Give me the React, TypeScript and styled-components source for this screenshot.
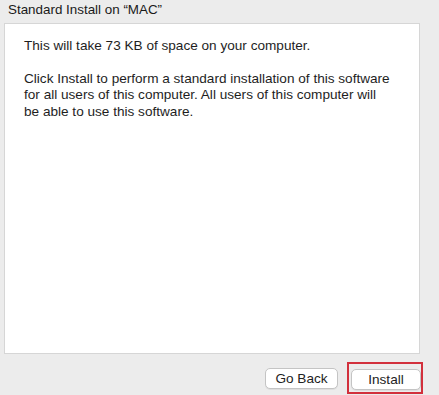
import React from 'react';
import styled, { createGlobalStyle } from 'styled-components';

const GlobalStyle = createGlobalStyle`
  html, body {
    margin: 0;
    padding: 0;
    background: #ececec;
  }
  body {
    font-family: 'Liberation Sans', Arial, sans-serif;
    color: #1d1d1d;
  }
`;

const Window = styled.div`
  width: 439px;
  height: 395px;
  display: flex;
  flex-direction: column;
  box-sizing: border-box;
  padding: 0 19px 0 4px;
`;

const Title = styled.div`
  font-size: 13.4px;
  line-height: 16px;
  padding: 2px 0 0 4px;
  height: 21px;
  color: #1a1a1a;
`;

const Panel = styled.div`
  height: 331px;
  box-sizing: border-box;
  background: #ffffff;
  border: 1px solid #d6d6d6;
  padding: 14px 20px 0 19px;
`;

const Paragraph = styled.p`
  margin: 0 0 16px;
  width: 368px;
  font-size: 13.6px;
  line-height: 16.5px;
  color: #1e1e1e;
`;

const Footer = styled.div`
  display: flex;
  justify-content: flex-end;
  align-items: center;
  gap: 9px;
  padding-top: 8px;
  margin-right: -3px;
`;

const Highlight = styled.div`
  border: 2px solid #d2303c;
  padding: 5px 0 2px 2px;
  display: flex;
`;

const Button = styled.button<{ $width: number }>`
  width: ${(p) => p.$width}px;
  height: 21px;
  box-sizing: border-box;
  border: 1px solid #c4c4c4;
  border-radius: 5px;
  background: #ffffff;
  box-shadow: 0 1px 0 rgba(0, 0, 0, 0.06);
  font-family: 'Liberation Sans', Arial, sans-serif;
  font-size: 13.6px;
  color: #222222;
  padding: 0;
  line-height: 19px;
`;

export default function App() {
  return (
    <>
      <GlobalStyle />
      <Window>
        <Title>Standard Install on “MAC”</Title>
        <Panel>
          <Paragraph>This will take 73 KB of space on your computer.</Paragraph>
          <Paragraph>
            Click Install to perform a standard installation of this software
            for all users of this computer. All users of this computer will
            be able to use this software.
          </Paragraph>
        </Panel>
        <Footer>
          <Button $width={73}>Go Back</Button>
          <Highlight>
            <Button $width={70}>Install</Button>
          </Highlight>
        </Footer>
      </Window>
    </>
  );
}
